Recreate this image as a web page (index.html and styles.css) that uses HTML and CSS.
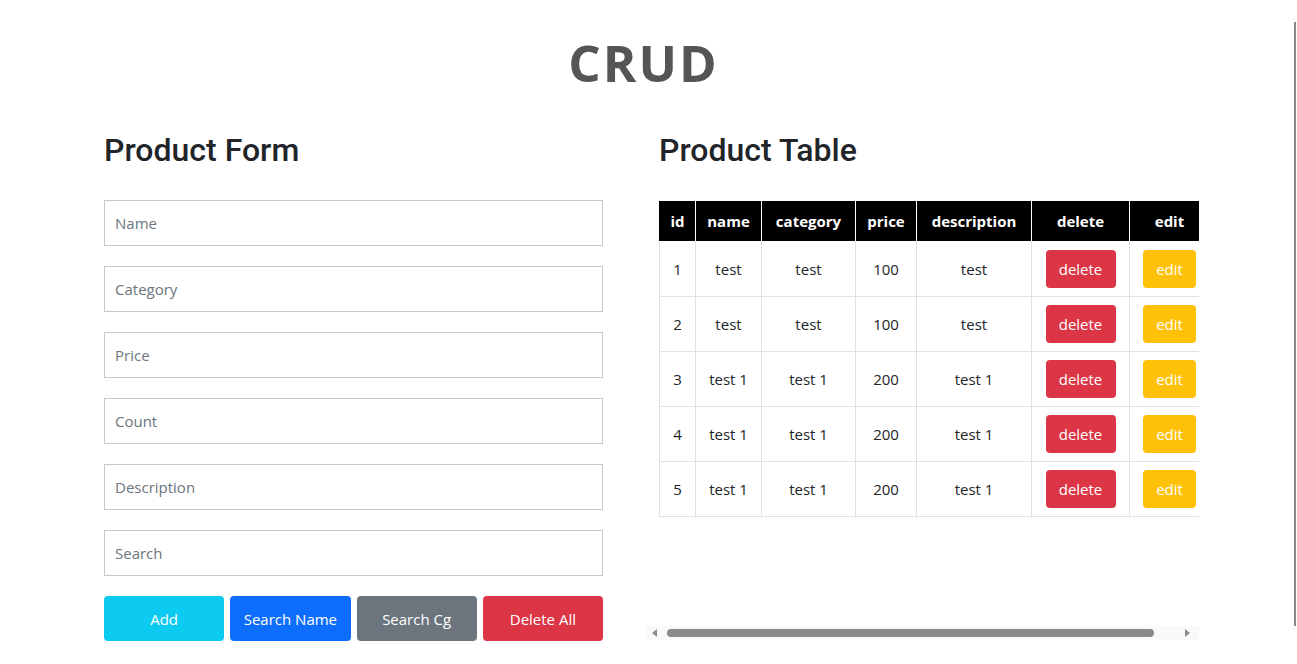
FILE: index.html
```html
<!DOCTYPE html>
<html>
<head>
<meta charset="utf-8">
<link rel="stylesheet" href="styles.css">
</head>
<body>
<h1 class="title">CRUD</h1>
<main class="layout">
  <section class="form-col">
    <h2 class="section-title">Product Form</h2>
    <div class="fields">
      <input class="field" placeholder="Name">
      <input class="field" placeholder="Category">
      <input class="field" placeholder="Price">
      <input class="field" placeholder="Count">
      <input class="field" placeholder="Description">
      <input class="field" placeholder="Search">
    </div>
    <div class="actions">
      <button class="btn btn-info">Add</button>
      <button class="btn btn-primary">Search Name</button>
      <button class="btn btn-secondary">Search Cg</button>
      <button class="btn btn-danger">Delete All</button>
    </div>
  </section>
  <section class="table-col">
    <h2 class="section-title">Product Table</h2>
    <div class="table-wrap">
      <table class="products">
        <thead>
          <tr><th class="c-id">id</th><th class="c-name">name</th><th class="c-cat">category</th><th class="c-price">price</th><th class="c-desc">description</th><th class="c-del">delete</th><th class="c-edit">edit</th></tr>
        </thead>
        <tbody>
          <tr><td>1</td><td>test</td><td>test</td><td>100</td><td>test</td><td><button class="cell-btn btn-danger">delete</button></td><td><button class="cell-btn btn-warning">edit</button></td></tr>
          <tr><td>2</td><td>test</td><td>test</td><td>100</td><td>test</td><td><button class="cell-btn btn-danger">delete</button></td><td><button class="cell-btn btn-warning">edit</button></td></tr>
          <tr><td>3</td><td>test 1</td><td>test 1</td><td>200</td><td>test 1</td><td><button class="cell-btn btn-danger">delete</button></td><td><button class="cell-btn btn-warning">edit</button></td></tr>
          <tr><td>4</td><td>test 1</td><td>test 1</td><td>200</td><td>test 1</td><td><button class="cell-btn btn-danger">delete</button></td><td><button class="cell-btn btn-warning">edit</button></td></tr>
          <tr><td>5</td><td>test 1</td><td>test 1</td><td>200</td><td>test 1</td><td><button class="cell-btn btn-danger">delete</button></td><td><button class="cell-btn btn-warning">edit</button></td></tr>
        </tbody>
      </table>
    </div>
    <div class="hscroll">
      <span class="arrow arrow-left"></span>
      <span class="thumb"></span>
      <span class="arrow arrow-right"></span>
    </div>
  </section>
</main>
<div class="vscroll"></div>
</body>
</html>
```

FILE: styles.css
```css
html, body {
  margin: 0;
  padding: 0;
  background: #fff;
  overflow: hidden;
}
body {
  font-family: "Open Sans", "Noto Sans", sans-serif;
  color: #212529;
  height: 664px;
}
.title {
  margin: 0;
  padding-top: 30px;
  padding-right: 10px;
  height: 98px;
  box-sizing: border-box;
  text-align: center;
  font-family: "Open Sans", sans-serif;
  font-weight: 700;
  font-size: 51px;
  line-height: 64px;
  letter-spacing: 2px;
  color: #555;
}
.layout {
  display: flex;
  padding-left: 104px;
  gap: 43px;
}
.form-col {
  width: 499px;
}
.table-col {
  width: 553px;
  position: relative;
}
.section-title {
  margin: 0;
  padding-top: 32px;
  height: 100px;
  box-sizing: border-box;
  font-family: Roboto, sans-serif;
  font-weight: 500;
  font-size: 32px;
  line-height: 40px;
  color: #212529;
}
.table-col .section-title {
  padding-left: 13px;
}
.fields {
  display: flex;
  flex-direction: column;
  gap: 20px;
  margin-top: 2px;
}
.field {
  height: 46px;
  box-sizing: border-box;
  border: 1px solid #c8c8c8;
  border-radius: 0;
  padding: 0 10px;
  font-family: "Open Sans", sans-serif;
  font-size: 15px;
  color: #212529;
  outline: none;
}
.field::placeholder {
  color: #6c757d;
}
.actions {
  display: flex;
  gap: 6px;
  margin-top: 20px;
}
.btn {
  flex: 1;
  height: 45px;
  border: none;
  border-radius: 4px;
  color: #fff;
  font-family: "Open Sans", sans-serif;
  font-size: 15px;
  padding: 0;
}
.btn-info { background: #0dcaf0; }
.btn-primary { background: #0d6efd; }
.btn-secondary { background: #6c757d; }
.btn-danger { background: #dc3545; color: #fff; }
.btn-warning { background: #ffc107; color: #fff; }
.table-wrap {
  margin-left: 13px;
  width: 540px;
  overflow: hidden;
  margin-top: 3px;
}
.products {
  border-collapse: collapse;
  table-layout: fixed;
  width: 543px;
  font-family: "Open Sans", sans-serif;
  font-size: 15px;
  text-align: center;
}
.products th {
  background: #000;
  color: #fff;
  font-weight: 700;
  height: 40px;
  padding: 0;
  border: 1px solid #fff;
  border-top: none;
}
.products th:first-child { border-left: 1px solid #000; }
.products td {
  height: 54px;
  padding: 0;
  border: 1px solid #dee2e6;
}
.c-id { width: 35px; }
.c-name { width: 65px; }
.c-cat { width: 93px; }
.c-price { width: 60px; }
.c-desc { width: 114px; }
.c-del { width: 97px; }
.c-edit { width: 79px; }
.cell-btn {
  border: none;
  border-radius: 4px;
  height: 38px;
  font-family: "Open Sans", sans-serif;
  font-size: 15px;
  padding: 0;
}
.cell-btn.btn-danger { width: 70px; }
.cell-btn.btn-warning { width: 53px; }
.hscroll {
  position: absolute;
  left: 0;
  top: 528px;
  width: 553px;
  height: 14px;
  background: #f9f9f9;
}
.thumb {
  position: absolute;
  left: 21px;
  top: 3px;
  width: 487px;
  height: 8px;
  border-radius: 4px;
  background: #8a8a8a;
}
.arrow {
  position: absolute;
  top: 3px;
  width: 0;
  height: 0;
  border-top: 4px solid transparent;
  border-bottom: 4px solid transparent;
}
.arrow-left {
  left: 6px;
  border-right: 5px solid #8a8a8a;
}
.arrow-right {
  left: 539px;
  border-left: 5px solid #8a8a8a;
}
.vscroll {
  position: fixed;
  right: 1px;
  top: 22px;
  width: 2px;
  height: 604px;
  background: #8a8a8a;
}
```
